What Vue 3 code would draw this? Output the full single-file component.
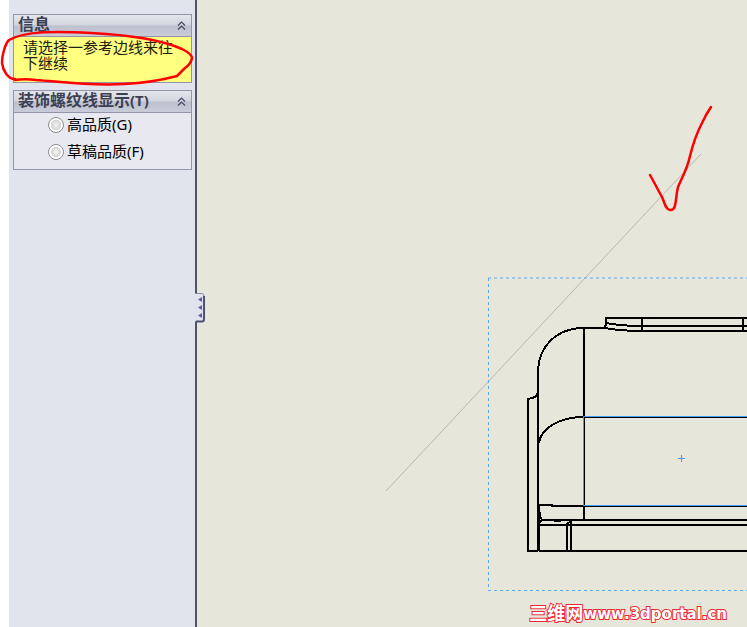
<template>
  <div class="app">
    <aside class="sidebar">
      <section class="panel">
        <header class="panel-header">
          <h2>信息</h2>
          <button type="button" aria-label="折叠信息" @click="infoOpen = !infoOpen">
            <svg width="9" height="10" viewBox="0 0 9 10"><path d="M1 4.5 4.5 1 8 4.5M1 8.5 4.5 5 8 8.5" /></svg>
          </button>
        </header>
        <p class="message" v-if="infoOpen">请选择一参考边线来往下继续</p>
      </section>

      <section class="panel">
        <header class="panel-header">
          <h2>装饰螺纹线显示<span class="key">(T)</span></h2>
          <button type="button" aria-label="折叠显示" @click="displayOpen = !displayOpen">
            <svg width="9" height="10" viewBox="0 0 9 10"><path d="M1 4.5 4.5 1 8 4.5M1 8.5 4.5 5 8 8.5" /></svg>
          </button>
        </header>
        <div class="options" v-if="displayOpen">
          <label v-for="o in options" :key="o.value">
            <input type="radio" name="quality" :value="o.value" v-model="quality" />
            <span>{{ o.label }}</span>
          </label>
        </div>
      </section>

      <button type="button" class="splitter" aria-label="收起面板">
        <svg width="11" height="30" viewBox="0 0 11 30">
          <path class="tab" d="M0 .5H7Q9 .5 9 3V26Q9 28.5 7 28.5H0" />
          <path class="shade" d="M9 3V26Q9 28.5 7 28.5H1" />
          <path class="arrow" d="M7 4v5L3 6.500zM7 12v5l-4-2.500zM7 20v5l-4-2.500z" />
        </svg>
      </button>
    </aside>

    <main class="canvas">
      <svg class="drawing" width="550" height="627" viewBox="197 0 550 627">
        <!-- vista -->
        <path class="guide" d="M386 491 701 154" />
        <path class="frame" d="M488 278H747M488.500 278V590" />
        <path class="frame" d="M488 590.500H747" />

        <!-- pieza -->
        <g class="edges">
          <path d="M584 328V520M584 328H604L606 325V318H747M606 323 619 325 634 326H747M604 328 619 330 634 331H747M642 318V331M743 318V331" />
          <path d="M584 328C556 328 538 347 538 373V551M538 393 535 397 532 398 528 399V551H538" />
          <path d="M584 417C560 417 541 428 539 443" />
          <path d="M584 417H747M538 505H552V506H747M541 520H747M539 525H747M539 551H747" />
          <path d="M539 505V551M539 507 540 516 542 520 539 523M554 521H561M567 551V524L571 521V551" />
        </g>
        <path class="selected" d="M747 416.500H583.500V505.500H747" />
        <path class="selected" d="M678 458.500H685M681.500 455V462" />

        <path class="red" d="M650 175C654 182 658 190 662 197C665 204 666 210 670 210C677 211 675 199 678 187C682 177 687 170 690 156C696 131 702 124 706 115L711 107" />
      </svg>
      <div class="watermark"><span class="site-name">三维网</span><span>www.3dportal.cn</span></div>
    </main>

    <svg class="circle" width="200" height="100" viewBox="0 0 200 100">
      <path class="red" d="M15 79C8 79 3 71 2 63C2 55 5 44 9 40C25 31 54 31 91 33C132 35 164 41 182 49Q192 54 192 58Q191 64 185 68L177 76C162 80 145 83 124 84C91 86 63 82 36 80C28 79 22 79 15 80" />
    </svg>
  </div>
</template>

<script setup>
import { ref } from 'vue'

const infoOpen = ref(true)
const displayOpen = ref(true)
const quality = ref('')

const options = [
  { value: 'high', label: '高品质(G)' },
  { value: 'draft', label: '草稿品质(F)' }
]
</script>

<style>
body {
  background: white;
}
</style>

<style scoped>
.app {
  position: relative;
  display: flex;
  min-height: 100vh;
  padding-left: 9px;
  box-sizing: border-box;
  font-family: "Noto Sans", "Noto Sans CJK SC", sans-serif;
}

.sidebar {
  position: relative;
  z-index: 1;
  flex: 0 0 188px;
  box-sizing: border-box;
  padding: 14px 3px 0 4px;
  display: flex;
  flex-direction: column;
  gap: 7px;
  background: #e1e4ec;
  border-right: 2px solid #50506c;
}

.panel {
  border: 1px solid #9494aa;
  background: #e8e8f0;
}

.panel-header {
  display: flex;
  align-items: center;
  justify-content: space-between;
  height: 21px;
  padding: 0 5px 0 4px;
  border-bottom: 1px solid #9494aa;
  background: linear-gradient(#e4e6ec, #d2d5de 48%, #bcc1cd 52%, #c8ccd8);
}

h2 {
  margin: 0;
  padding-bottom: 3px;
  font-size: 16px;
  line-height: 16px;
  font-weight: bold;
  color: #3c4054;
  white-space: nowrap;
}

.key {
  font-size: 15px;
}

button {
  display: flex;
  padding: 0;
  border: 0;
  background: none;
  cursor: pointer;
}

.panel-header path {
  fill: none;
  stroke: #454860;
  stroke-width: 1.2;
}

.message {
  margin: 0;
  height: 45px;
  box-sizing: border-box;
  padding: 2px 9px;
  background: #ffff80;
  color: #202010;
  font-size: 15px;
  line-height: 16px;
}

.options {
  display: flex;
  flex-direction: column;
  gap: 7px;
  padding: 2px 0 7px 34px;
}

label {
  display: flex;
  align-items: center;
  gap: 3px;
  height: 20px;
  font-size: 15px;
  line-height: 20px;
  color: #000;
}

label span {
  padding-bottom: 2px;
}

input {
  appearance: none;
  box-sizing: border-box;
  width: 16px;
  height: 16px;
  margin: 0;
  border: 1px solid #8c8c8c;
  border-radius: 50%;
  background: radial-gradient(circle closest-side, #f4f4f4, #d4d4d4 68%, #fff 78%);
}

input:checked {
  background: radial-gradient(#245 30%, #fff 40%);
}

.splitter {
  position: absolute;
  top: 293px;
  left: 186px;
}

.tab {
  fill: #e1e4ec;
  stroke: #8c8ca4;
}

.shade {
  fill: none;
  stroke: #505074;
  stroke-width: 2;
}

.arrow {
  fill: #6058a8;
}

.canvas {
  position: relative;
  flex: 1;
  min-width: 0;
  overflow: hidden;
  background: #e6e6da;
}

.drawing {
  position: absolute;
  top: 0;
  left: 0;
}

.guide {
  stroke: #b8b8b4;
}

.frame {
  fill: none;
  stroke: #5cacf4;
  stroke-dasharray: 3 3;
}

.edges {
  fill: none;
  stroke: #000;
  stroke-width: 2;
}

.edges path {
  shape-rendering: crispEdges;
}

.selected {
  fill: none;
  stroke: #459ff8;
}

.red {
  fill: none;
  stroke: #f00;
  stroke-width: 2.5;
  stroke-linecap: round;
  stroke-linejoin: round;
}

.watermark {
  position: absolute;
  right: 20px;
  bottom: 3px;
  display: flex;
  align-items: center;
  font-family: "DejaVu Sans", "Noto Sans CJK SC", sans-serif;
  font-size: 15px;
  line-height: 20px;
  font-weight: bold;
  color: #fff;
  -webkit-text-stroke: 2px #ee2832;
  paint-order: stroke fill;
}

.site-name {
  font-size: 18px;
}

.circle {
  position: absolute;
  z-index: 2;
  top: 0;
  left: 0;
  pointer-events: none;
}
</style>
